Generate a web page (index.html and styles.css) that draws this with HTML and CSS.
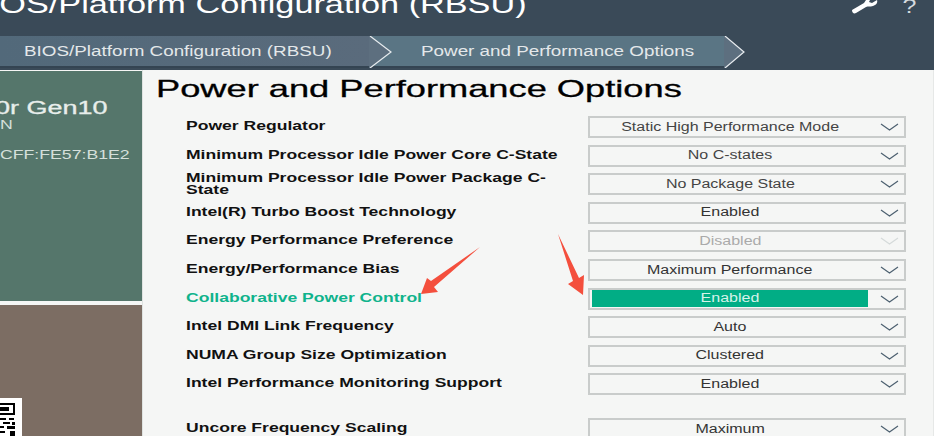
FILE: index.html
```html
<!DOCTYPE html>
<html lang="en">

<head>
    <meta charset="UTF-8">
    <title>Power and Performance Options</title>
    <link rel="stylesheet" href="styles.css">
</head>

<body>
    <header class="top">
        <div class="top-title">
            <h1>BIOS/Platform Configuration (RBSU)</h1>
            <div class="top-icons">
                <svg class="wrench" viewBox="0 0 27 14" width="27" height="14">
                    <path d="M1 10 L13 3 L15 0 L19 0 L18 2 L21 3 L26 0 C27 3 25 5 22 6 C19 7 17 6 15 7 L5 13 C3 14 1 13 1 10 Z" fill="#fff"></path>
                </svg>
                <span class="help">?</span>
            </div>
        </div>
        <nav class="crumbs">
            <div class="crumb crumb-first"><span>BIOS/Platform Configuration (RBSU)</span></div>
            <svg class="chev" viewBox="0 0 24 32" width="24" height="32">
                <path d="M0 0 H1 L22 16 L1 32 H0 Z" fill="#5d6f7f"></path>
                <path d="M1 0 L22 16 L1 32" fill="none" stroke="#e8ecef" stroke-width="1.2"></path>
            </svg>
            <div class="crumb crumb-last"><span>Power and Performance Options</span></div>
            <svg class="chev" viewBox="0 0 24 32" width="24" height="32">
                <path d="M0 0 H1 L20 16 L1 32 H0 Z" fill="#5d6f7f"></path>
                <path d="M1 0 L20 16 L1 32" fill="none" stroke="#e8ecef" stroke-width="1.2"></path>
            </svg>
        </nav>
    </header>

    <div class="main">
        <aside class="side">
            <div class="side-green">
                <div class="model">0r Gen10</div>
                <div class="sub">N</div>
                <div class="addr">CFF:FE57:B1E2</div>
            </div>
            <div class="side-brown">
                <svg class="qr" viewBox="0 0 22 38" width="22" height="38">
                    <rect width="22" height="38" fill="#fff"></rect>
                    <path d="M0 5 H15 V17 H0 Z M0 7 V15 H13 V7 Z" fill="#000" fill-rule="evenodd"></path>
                    <rect x="0" y="9" width="9" height="4" fill="#000"></rect>
                    <path d="M0 20 H6 V22 H0 Z M9 20 H14 V22 H9 Z M3 24 H10 V26 H3 Z M12 24 H15 V27 H12 Z M0 28 H4 V30 H0 Z M7 28 H15 V31 H7 Z M0 33 H5 V35 H0 Z M10 33 H15 V38 H10 Z" fill="#000"></path>
                </svg>
            </div>
        </aside>

        <section class="content">
            <h2>Power and Performance Options</h2>
            <div class="rows">
                <div class="row">
                    <label>Power Regulator</label>
                    <div class="select"><div class="val val-thin"><span>Static High Performance Mode</span></div><svg class="arrow" viewBox="0 0 19 8"><path d="M1 1 L9.5 7 L18 1"></path></svg></div>
                </div>
                <div class="row">
                    <label>Minimum Processor Idle Power Core C-State</label>
                    <div class="select"><div class="val val-thin"><span>No C-states</span></div><svg class="arrow" viewBox="0 0 19 8"><path d="M1 1 L9.5 7 L18 1"></path></svg></div>
                </div>
                <div class="row">
                    <label class="two">Minimum Processor Idle Power Package C-State</label>
                    <div class="select"><div class="val val-thin"><span>No Package State</span></div><svg class="arrow" viewBox="0 0 19 8"><path d="M1 1 L9.5 7 L18 1"></path></svg></div>
                </div>
                <div class="row">
                    <label>Intel(R) Turbo Boost Technology</label>
                    <div class="select"><div class="val"><span>Enabled</span></div><svg class="arrow" viewBox="0 0 19 8"><path d="M1 1 L9.5 7 L18 1"></path></svg></div>
                </div>
                <div class="row">
                    <label>Energy Performance Preference</label>
                    <div class="select is-disabled"><div class="val"><span>Disabled</span></div><svg class="arrow" viewBox="0 0 19 8"><path d="M1 1 L9.5 7 L18 1"></path></svg></div>
                </div>
                <div class="row">
                    <label>Energy/Performance Bias</label>
                    <div class="select"><div class="val"><span>Maximum Performance</span></div><svg class="arrow" viewBox="0 0 19 8"><path d="M1 1 L9.5 7 L18 1"></path></svg></div>
                </div>
                <div class="row is-active">
                    <label>Collaborative Power Control</label>
                    <div class="select"><div class="val"><span>Enabled</span></div><svg class="arrow" viewBox="0 0 19 8"><path d="M1 1 L9.5 7 L18 1"></path></svg></div>
                </div>
                <div class="row">
                    <label>Intel DMI Link Frequency</label>
                    <div class="select"><div class="val"><span>Auto</span></div><svg class="arrow" viewBox="0 0 19 8"><path d="M1 1 L9.5 7 L18 1"></path></svg></div>
                </div>
                <div class="row">
                    <label>NUMA Group Size Optimization</label>
                    <div class="select"><div class="val"><span>Clustered</span></div><svg class="arrow" viewBox="0 0 19 8"><path d="M1 1 L9.5 7 L18 1"></path></svg></div>
                </div>
                <div class="row">
                    <label>Intel Performance Monitoring Support</label>
                    <div class="select"><div class="val"><span>Enabled</span></div><svg class="arrow" viewBox="0 0 19 8"><path d="M1 1 L9.5 7 L18 1"></path></svg></div>
                </div>
                <div class="row row-gap">
                    <label>Uncore Frequency Scaling</label>
                    <div class="select"><div class="val"><span>Maximum</span></div><svg class="arrow" viewBox="0 0 19 8"><path d="M1 1 L9.5 7 L18 1"></path></svg></div>
                </div>
            </div>
            <div class="scroll"></div>
        </section>
    </div>

    <!-- red arrows drawn on top of the screenshot -->
    <svg class="mark" viewBox="0 0 934 436" width="934" height="436">
        <path d="M480 247 L431 281 L427 278 L421 294 L438 292 L434 287 Z" fill="#f44f3d"></path>
        <path d="M558 234 L579 278 L584 275 L583 295 L568 284 L573 281 Z" fill="#f44f3d"></path>
    </svg>
</body>

</html>
```

FILE: styles.css
```css
* {
    box-sizing: border-box;
}

html,
body {
    margin: 0;
    padding: 0;
}

body {
    width: 934px;
    height: 436px;
    overflow: hidden;
    position: relative;
    background: #f5f6f5;
    font-family: "Liberation Sans", Arial, sans-serif;
}

/* the whole screenshot is stretched sideways, so text gets a scaleX */
.top {
    height: 70px;
    background: #3a4a58;
    color: #fff;
    overflow: hidden;
}

.top-title {
    height: 36px;
    display: flex;
    justify-content: space-between;
}

.top-title h1 {
    margin: -11px 0 0 -33px;
    font-size: 25px;
    line-height: 30px;
    font-weight: normal;
    white-space: nowrap;
    transform: scaleX(1.37);
    transform-origin: left center;
}

.top-icons {
    display: flex;
    gap: 24px;
    margin-right: 17px;
}

.help {
    width: 15px;
    margin-top: -4px;
    font-size: 20px;
    line-height: 20px;
    color: #d5dade;
    text-align: center;
    transform: scaleX(1.25);
}

.crumbs {
    display: flex;
    height: 32px;
}

.crumb {
    font-size: 14px;
    line-height: 30px;
    color: #e4e8ea;
    white-space: nowrap;
    border-bottom: 2px solid #344452;
}

.crumb span {
    display: inline-block;
    transform: scaleX(1.345);
    transform-origin: left center;
}

.crumb-first {
    width: 369px;
    padding-left: 24px;
    background: linear-gradient(to right, #52697a, #5a6b7c);
}

.crumb-last {
    width: 355px;
    padding-left: 52px;
    margin-left: -24px;
    background: #5a7584;
}

.chev {
    flex: none;
    position: relative;
    z-index: 1;
}

.main {
    display: flex;
    height: 366px;
}

.side {
    width: 143px;
    padding-top: 1px;
    border-right: 1px solid #dfe3e1;
    flex: none;
}

.side-green {
    height: 230px;
    background: #55766b;
    color: #e8eeeb;
    padding-top: 26px;
    overflow: hidden;
}

.model {
    margin-left: -5px;
    font-size: 18px;
    line-height: 22px;
    white-space: nowrap;
    -webkit-text-stroke: .3px #e8eeeb;
    transform: scaleX(1.5);
    transform-origin: left center;
}

.sub,
.addr {
    font-size: 13px;
    color: #d5e0db;
    white-space: nowrap;
    transform: scaleX(1.36);
    transform-origin: left center;
}

.sub {
    line-height: 12px;
}

.addr {
    margin-top: 16px;
    line-height: 15px;
}

.side-brown {
    height: 131px;
    margin-top: 4px;
    background: #7c6d63;
    position: relative;
}

.qr {
    position: absolute;
    left: 0;
    top: 93px;
}

.content {
    flex: 1;
    position: relative;
    overflow: hidden;
}

.content h2 {
    margin: 3px 0 0 12.5px;
    font-size: 24px;
    line-height: 32px;
    font-weight: normal;
    color: #000;
    white-space: nowrap;
    -webkit-text-stroke: .3px #000;
    transform: scaleX(1.51);
    transform-origin: left center;
}

.rows {
    margin-top: 8px;
    padding-left: 43px;
}

.row {
    display: flex;
    justify-content: space-between;
    align-items: center;
    height: 28.55px;
    padding-right: 28px;
}

.row-gap {
    margin-top: 16.5px;
}

.row label {
    width: 280px;
    flex: none;
    font-size: 13px;
    line-height: 12px;
    font-weight: bold;
    color: #111;
    margin-top: -2px;
    transform: scaleX(1.35);
    transform-origin: left center;
}

.row label.two {
    margin-top: -1px;
}

.select {
    width: 318px;
    height: 22px;
    border: 2px solid #c9cccb;
    display: flex;
    align-items: center;
    padding: 0 5px 0 2px;
    font-size: 12.5px;
    color: #333;
}

.val {
    flex: 1;
    text-align: center;
    line-height: 17px;
    margin-right: 12px;
}

.val span {
    display: inline-block;
    transform: scaleX(1.28);
}

.val-thin {
    color: #444;
}

.arrow {
    width: 19px;
    height: 8px;
    flex: none;
    fill: none;
    stroke: #4d6070;
    stroke-width: 1.2;
}

.is-disabled {
    color: #aaa;
}

.is-disabled .arrow {
    stroke: #d5dada;
}

.is-active label {
    color: #0fb38c;
}

.is-active .val {
    background: #01ad85;
    color: #d6f3ea;
}

.scroll {
    position: absolute;
    top: 0;
    right: 0;
    bottom: 0;
    width: 1px;
    background: #e6e8e7;
}

.mark {
    position: absolute;
    left: 0;
    top: 0;
    pointer-events: none;
}
```
